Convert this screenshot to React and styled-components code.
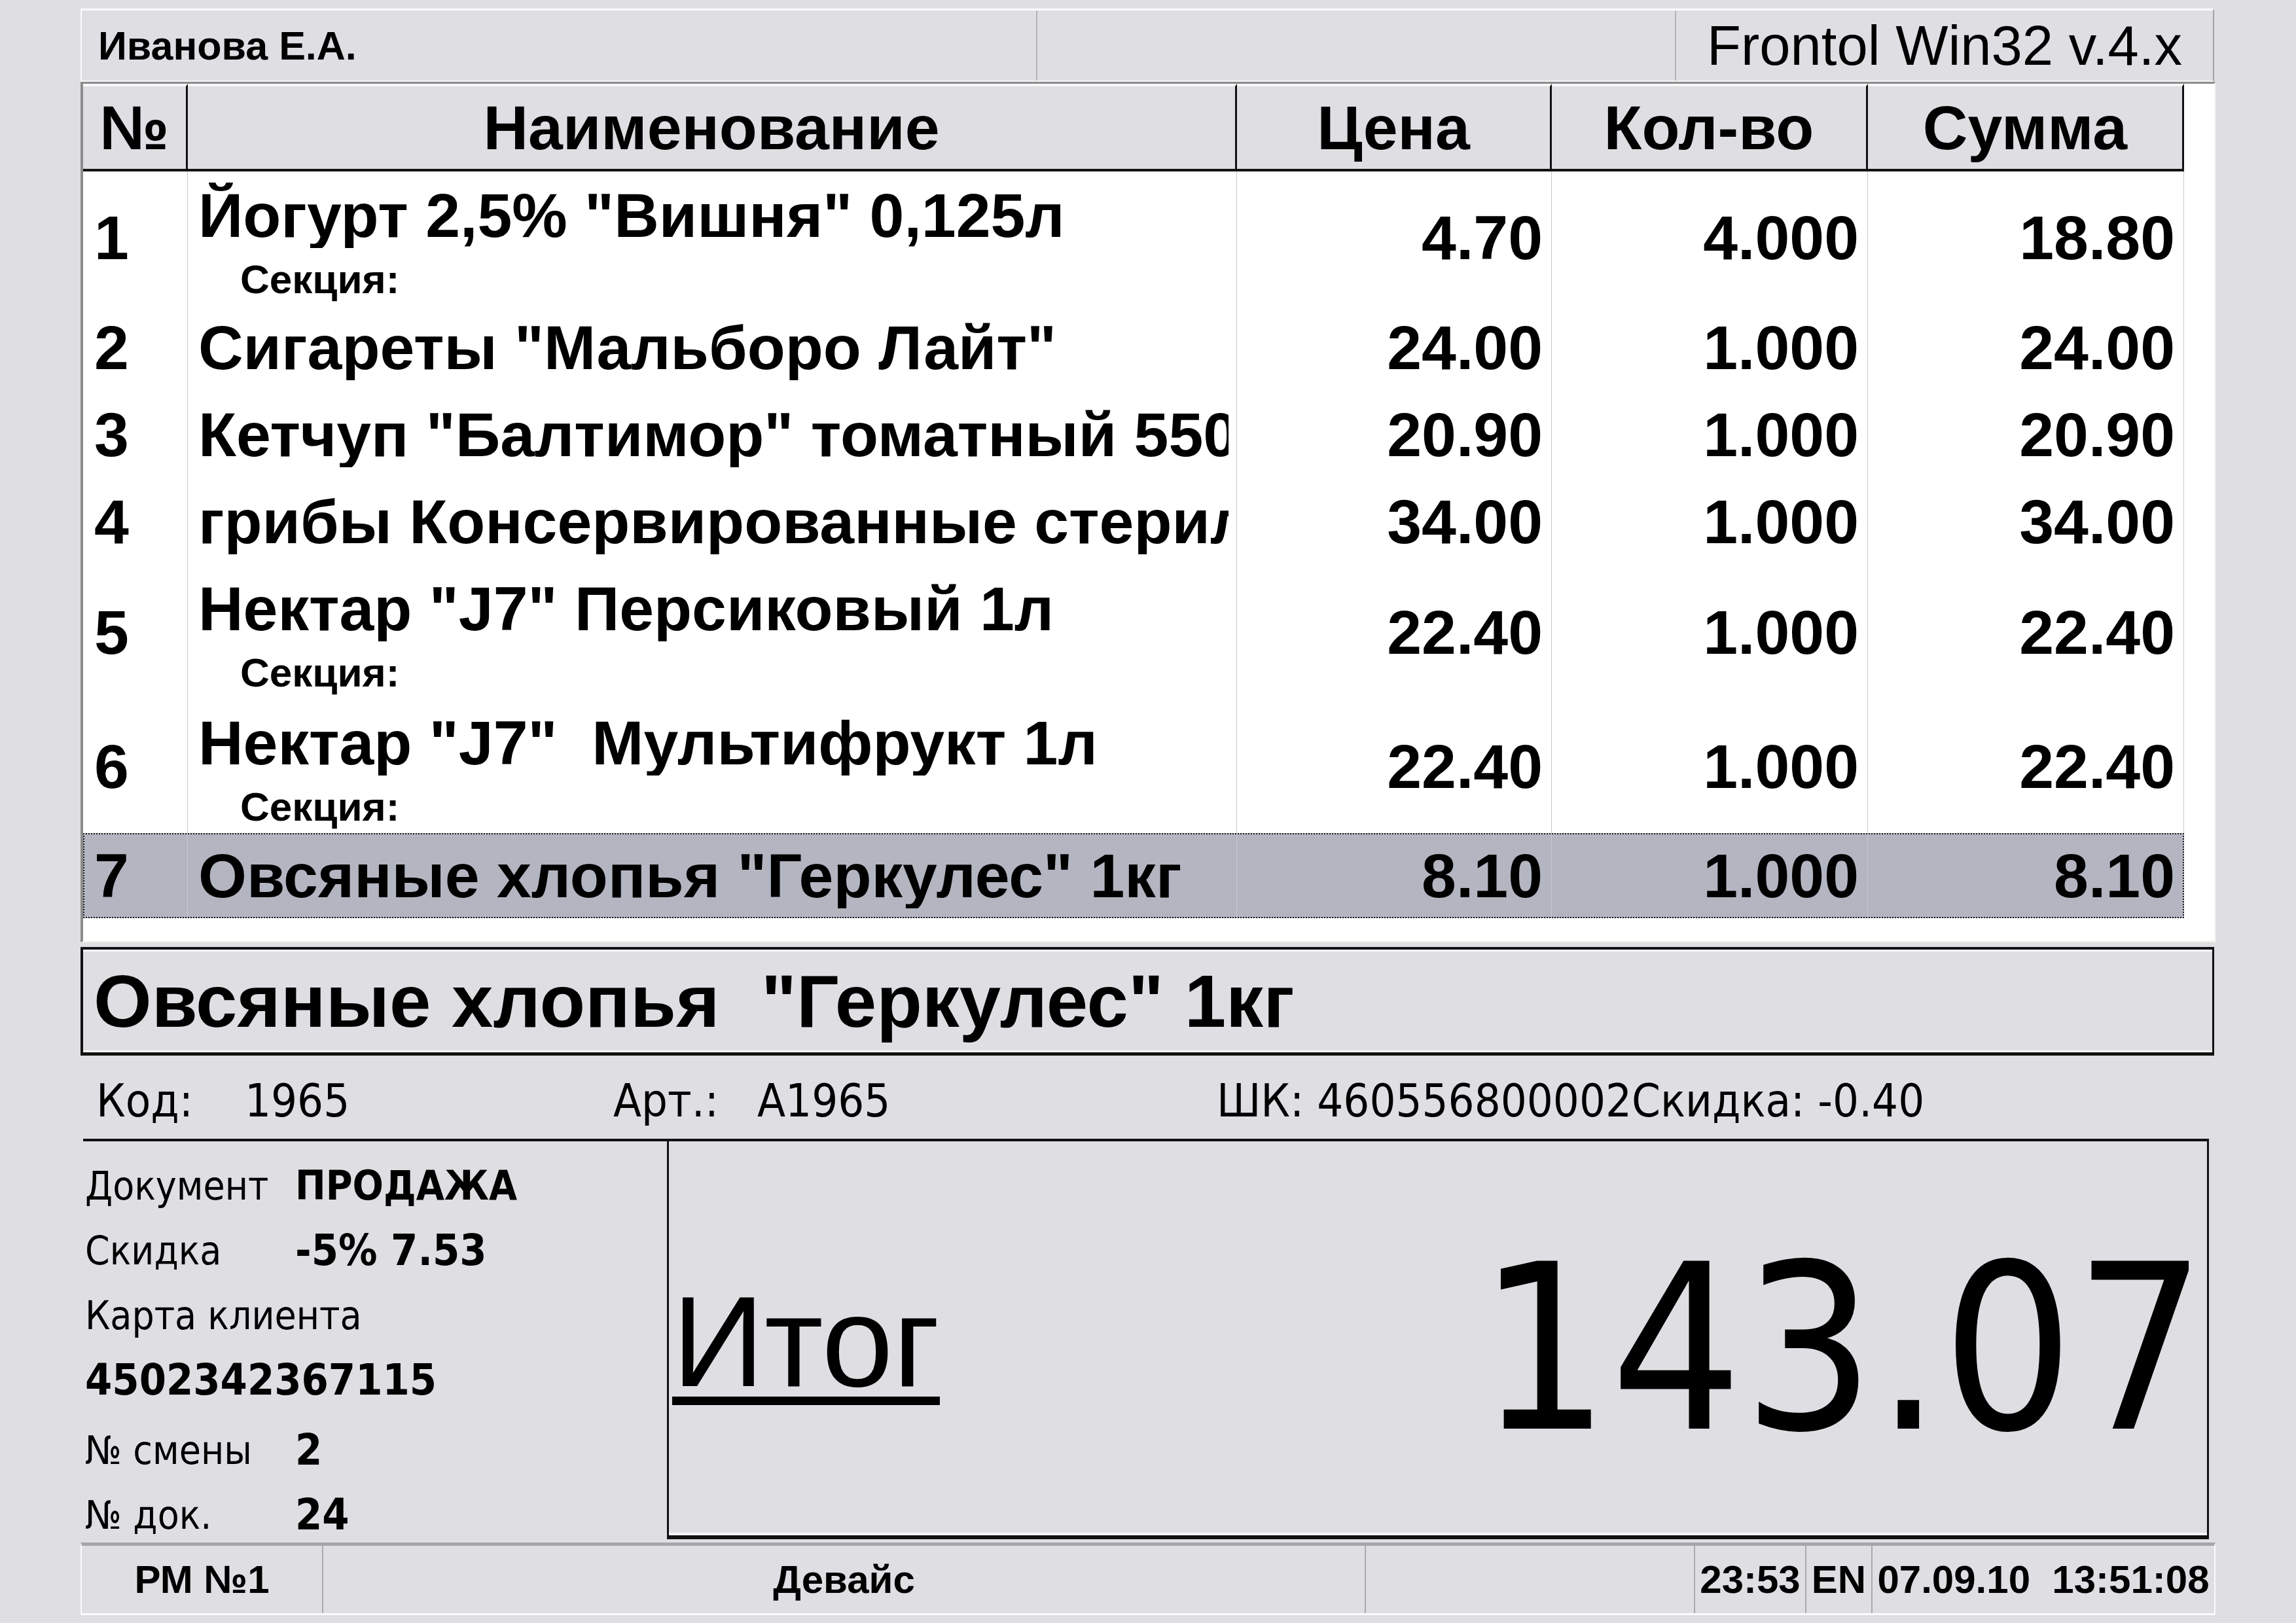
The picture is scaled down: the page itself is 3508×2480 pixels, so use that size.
import React from "react";
import styled, { createGlobalStyle } from "styled-components";

const ARIAL = `"Liberation Sans", Arial, sans-serif`;
const TAHOMA = `"DejaVu Sans Condensed", "DejaVu Sans", sans-serif`;
const COLS = "160px 1603px 481px 483px 483px";

const GlobalStyle = createGlobalStyle`
  html, body { margin: 0; padding: 0; background: #dfdfe3; }
  body { font-family: ${ARIAL}; color: #000; }
  * { box-sizing: border-box; }
`;

const Screen = styled.div`
  width: 3508px;
  height: 2480px;
  padding: 13px 123px 0 123px;
  display: flex;
  flex-direction: column;
  font-family: ${ARIAL};
`;

const TopBar = styled.div`
  display: grid;
  grid-template-columns: 1460px 976px 1fr;
  height: 112px;
  margin-right: 2px;
  border-top: 3px solid #fbfbfb;
  border-left: 2px solid #fbfbfb;
  border-right: 2px solid #a4a4a4;
  border-bottom: 2px solid #f4f4f4;
`;

const TopCell = styled.div`
  display: flex;
  align-items: center;
  justify-content: ${p => (p.center ? "center" : "flex-start")};
  padding-left: ${p => (p.center ? 0 : 25)}px;
  border-right: ${p => (p.last ? "none" : "2px solid #b4b4b4")};
  font-size: ${p => (p.big ? 85 : 61)}px;
  font-weight: ${p => (p.big ? "normal" : "bold")};
  white-space: nowrap;
`;

const Table = styled.div`
  height: 1315px;
  background: #fff;
  border-top: 3px solid #8c8c8c;
  border-left: 4px solid #8c8c8c;
  border-right: 2px solid #fafaf2;
  border-bottom: 2px solid #f2f0e2;
  overflow: hidden;
`;

const HeaderRow = styled.div`
  display: grid;
  grid-template-columns: ${COLS};
  width: 3210px;
  height: 134px;
`;

const HeaderCell = styled.div`
  display: flex;
  align-items: center;
  justify-content: center;
  background: #dfdfe3;
  border-top: 4px solid #f7f7f9;
  border-right: 3px solid #111;
  border-bottom: 4px solid #111;
  font-size: 95px;
  font-weight: bold;
  white-space: nowrap;
`;

const Row = styled.div`
  display: grid;
  grid-template-columns: ${COLS};
  width: 3210px;
  height: ${p => p.h}px;
  background: ${p => (p.selected ? "#b3b5c1" : "#fff")};
  outline: ${p => (p.selected ? "2px dotted #1a1a1a" : "none")};
  outline-offset: -2px;
`;

const Cell = styled.div`
  display: flex;
  align-items: center;
  justify-content: ${p => (p.right ? "flex-end" : "flex-start")};
  padding: ${p => (p.right ? "0 13px 0 0" : "0 0 0 17px")};
  border-right: 1px solid #c9c9c9;
  font-size: 95px;
  font-weight: bold;
  line-height: 100px;
  white-space: nowrap;
`;

const NameCell = styled.div`
  display: flex;
  flex-direction: column;
  justify-content: ${p => (p.top ? "flex-start" : "center")};
  padding: ${p => (p.top ? "17px" : "0")} 12px 0 16px;
  border-right: 1px solid #c9c9c9;
  min-width: 0;
`;

const NameLine = styled.div`
  font-size: 95px;
  font-weight: bold;
  line-height: 100px;
  white-space: pre;
  overflow: hidden;
`;

const Section = styled.div`
  margin-top: 16px;
  padding-left: 64px;
  font-size: 62px;
  font-weight: bold;
  line-height: 64px;
`;

const ProductBox = styled.div`
  margin-top: 7px;
  height: 166px;
  margin-right: 2px;
  display: flex;
  align-items: center;
  padding-left: 16px;
  background: #dfdfe3;
  border: 4px solid #111;
  border-right-width: 3px;
  border-bottom-width: 5px;
  box-shadow: inset 0 3px 0 #f7f7f9, inset 0 -3px 0 #f7f7f9;
  font-size: 114px;
  font-weight: bold;
  white-space: pre;
`;

const CodeLine = styled.div`
  height: 127px;
  display: grid;
  grid-template-columns: 227px 563px 220px 702px auto;
  align-items: center;
  padding: 11px 0 0 24px;
  font-family: ${TAHOMA};
  font-size: 70px;
  white-space: nowrap;
`;

const BottomArea = styled.div`
  display: grid;
  grid-template-columns: 892px 1fr;
  height: 617px;
  border-top: 4px solid #111;
  margin-left: 4px;
  margin-right: 10px;
`;

const InfoPanel = styled.div`
  padding: 18px 0 0 3px;
  font-family: ${TAHOMA};
  font-size: 60px;
`;

const InfoRow = styled.div`
  display: grid;
  grid-template-columns: 321px auto;
  align-items: center;
  height: 99px;
  margin-top: ${p => p.gap || 0}px;
  white-space: nowrap;
`;

const Value = styled.span`
  font-weight: bold;
  font-size: ${p => (p.num ? 66 : 62)}px;
`;

const TotalBox = styled.div`
  display: flex;
  align-items: center;
  justify-content: space-between;
  margin-bottom: 12px;
  padding: 0 0 0 5px;
  border-left: 3px solid #111;
  border-right: 3px solid #111;
  border-bottom: 6px solid #111;
  box-shadow: inset 0 -4px 0 #f7f7f9;
`;

const TotalLabel = styled.span`
  margin-top: 12px;
  font-size: 196px;
  line-height: 1;
  text-decoration: underline;
  text-decoration-thickness: 13px;
  text-underline-offset: 16px;
`;

const TotalSum = styled.span`
  margin-top: 32px;
  font-family: ${TAHOMA};
  font-size: 352px;
  line-height: 1;
  letter-spacing: 1px;
`;

const StatusBar = styled.div`
  display: grid;
  grid-template-columns: 369px 1593px 503px 170px 101px 1fr;
  height: 111px;
  border-top: 5px solid #a6a6aa;
  border-bottom: 3px solid #fbfbfb;
  border-left: 2px solid #fbfbfb;
  border-right: 2px solid #fbfbfb;
`;

const StatusCell = styled.div`
  display: flex;
  align-items: center;
  justify-content: center;
  border-right: ${p => (p.last ? "none" : "2px solid #aaaaae")};
  font-size: 60px;
  font-weight: bold;
  white-space: pre;
`;

const items = [
  { n: 1, name: 'Йогурт 2,5% "Вишня" 0,125л', section: true, price: "4.70", qty: "4.000", sum: "18.80", h: 202 },
  { n: 2, name: 'Сигареты "Мальборо Лайт"', price: "24.00", qty: "1.000", sum: "24.00", h: 133 },
  { n: 3, name: 'Кетчуп "Балтимор" томатный 550г', price: "20.90", qty: "1.000", sum: "20.90", h: 133 },
  { n: 4, name: "грибы Консервированные стерилизованные", price: "34.00", qty: "1.000", sum: "34.00", h: 133 },
  { n: 5, name: 'Нектар "J7" Персиковый 1л', section: true, price: "22.40", qty: "1.000", sum: "22.40", h: 205 },
  { n: 6, name: 'Нектар "J7"  Мультифрукт 1л', section: true, price: "22.40", qty: "1.000", sum: "22.40", h: 205 },
  { n: 7, name: 'Овсяные хлопья "Геркулес" 1кг', price: "8.10", qty: "1.000", sum: "8.10", h: 130, selected: true },
];

const headers = ["№", "Наименование", "Цена", "Кол-во", "Сумма"];

export default function App() {
  return (
    <Screen>
      <GlobalStyle />
      <TopBar>
        <TopCell>Иванова Е.А.</TopCell>
        <TopCell />
        <TopCell center big last>Frontol Win32 v.4.x</TopCell>
      </TopBar>

      <Table>
        <HeaderRow>
          {headers.map(h => (
            <HeaderCell key={h}>{h}</HeaderCell>
          ))}
        </HeaderRow>
        {items.map(item => (
          <Row key={item.n} h={item.h} selected={item.selected}>
            <Cell>{item.n}</Cell>
            <NameCell top={item.section}>
              <NameLine>{item.name}</NameLine>
              {item.section && <Section>Секция:</Section>}
            </NameCell>
            <Cell right>{item.price}</Cell>
            <Cell right>{item.qty}</Cell>
            <Cell right>{item.sum}</Cell>
          </Row>
        ))}
      </Table>

      <ProductBox>{'Овсяные хлопья  "Геркулес" 1кг'}</ProductBox>

      <CodeLine>
        <span>Код:</span>
        <span>1965</span>
        <span>Арт.:</span>
        <span>A1965</span>
        <span>ШК: 460556800002Скидка: -0.40</span>
      </CodeLine>

      <BottomArea>
        <InfoPanel>
          <InfoRow>
            <span>Документ</span>
            <Value>ПРОДАЖА</Value>
          </InfoRow>
          <InfoRow>
            <span>Скидка</span>
            <Value num>-5% 7.53</Value>
          </InfoRow>
          <InfoRow>
            <span>Карта клиента</span>
          </InfoRow>
          <InfoRow>
            <Value num>4502342367115</Value>
          </InfoRow>
          <InfoRow gap={8}>
            <span>№ смены</span>
            <Value num>2</Value>
          </InfoRow>
          <InfoRow>
            <span>№ док.</span>
            <Value num>24</Value>
          </InfoRow>
        </InfoPanel>
        <TotalBox>
          <TotalLabel>Итог</TotalLabel>
          <TotalSum>143.07</TotalSum>
        </TotalBox>
      </BottomArea>

      <StatusBar>
        <StatusCell>РМ №1</StatusCell>
        <StatusCell>Девайс</StatusCell>
        <StatusCell />
        <StatusCell>23:53</StatusCell>
        <StatusCell>EN</StatusCell>
        <StatusCell last>{"07.09.10  13:51:08"}</StatusCell>
      </StatusBar>
    </Screen>
  );
}
